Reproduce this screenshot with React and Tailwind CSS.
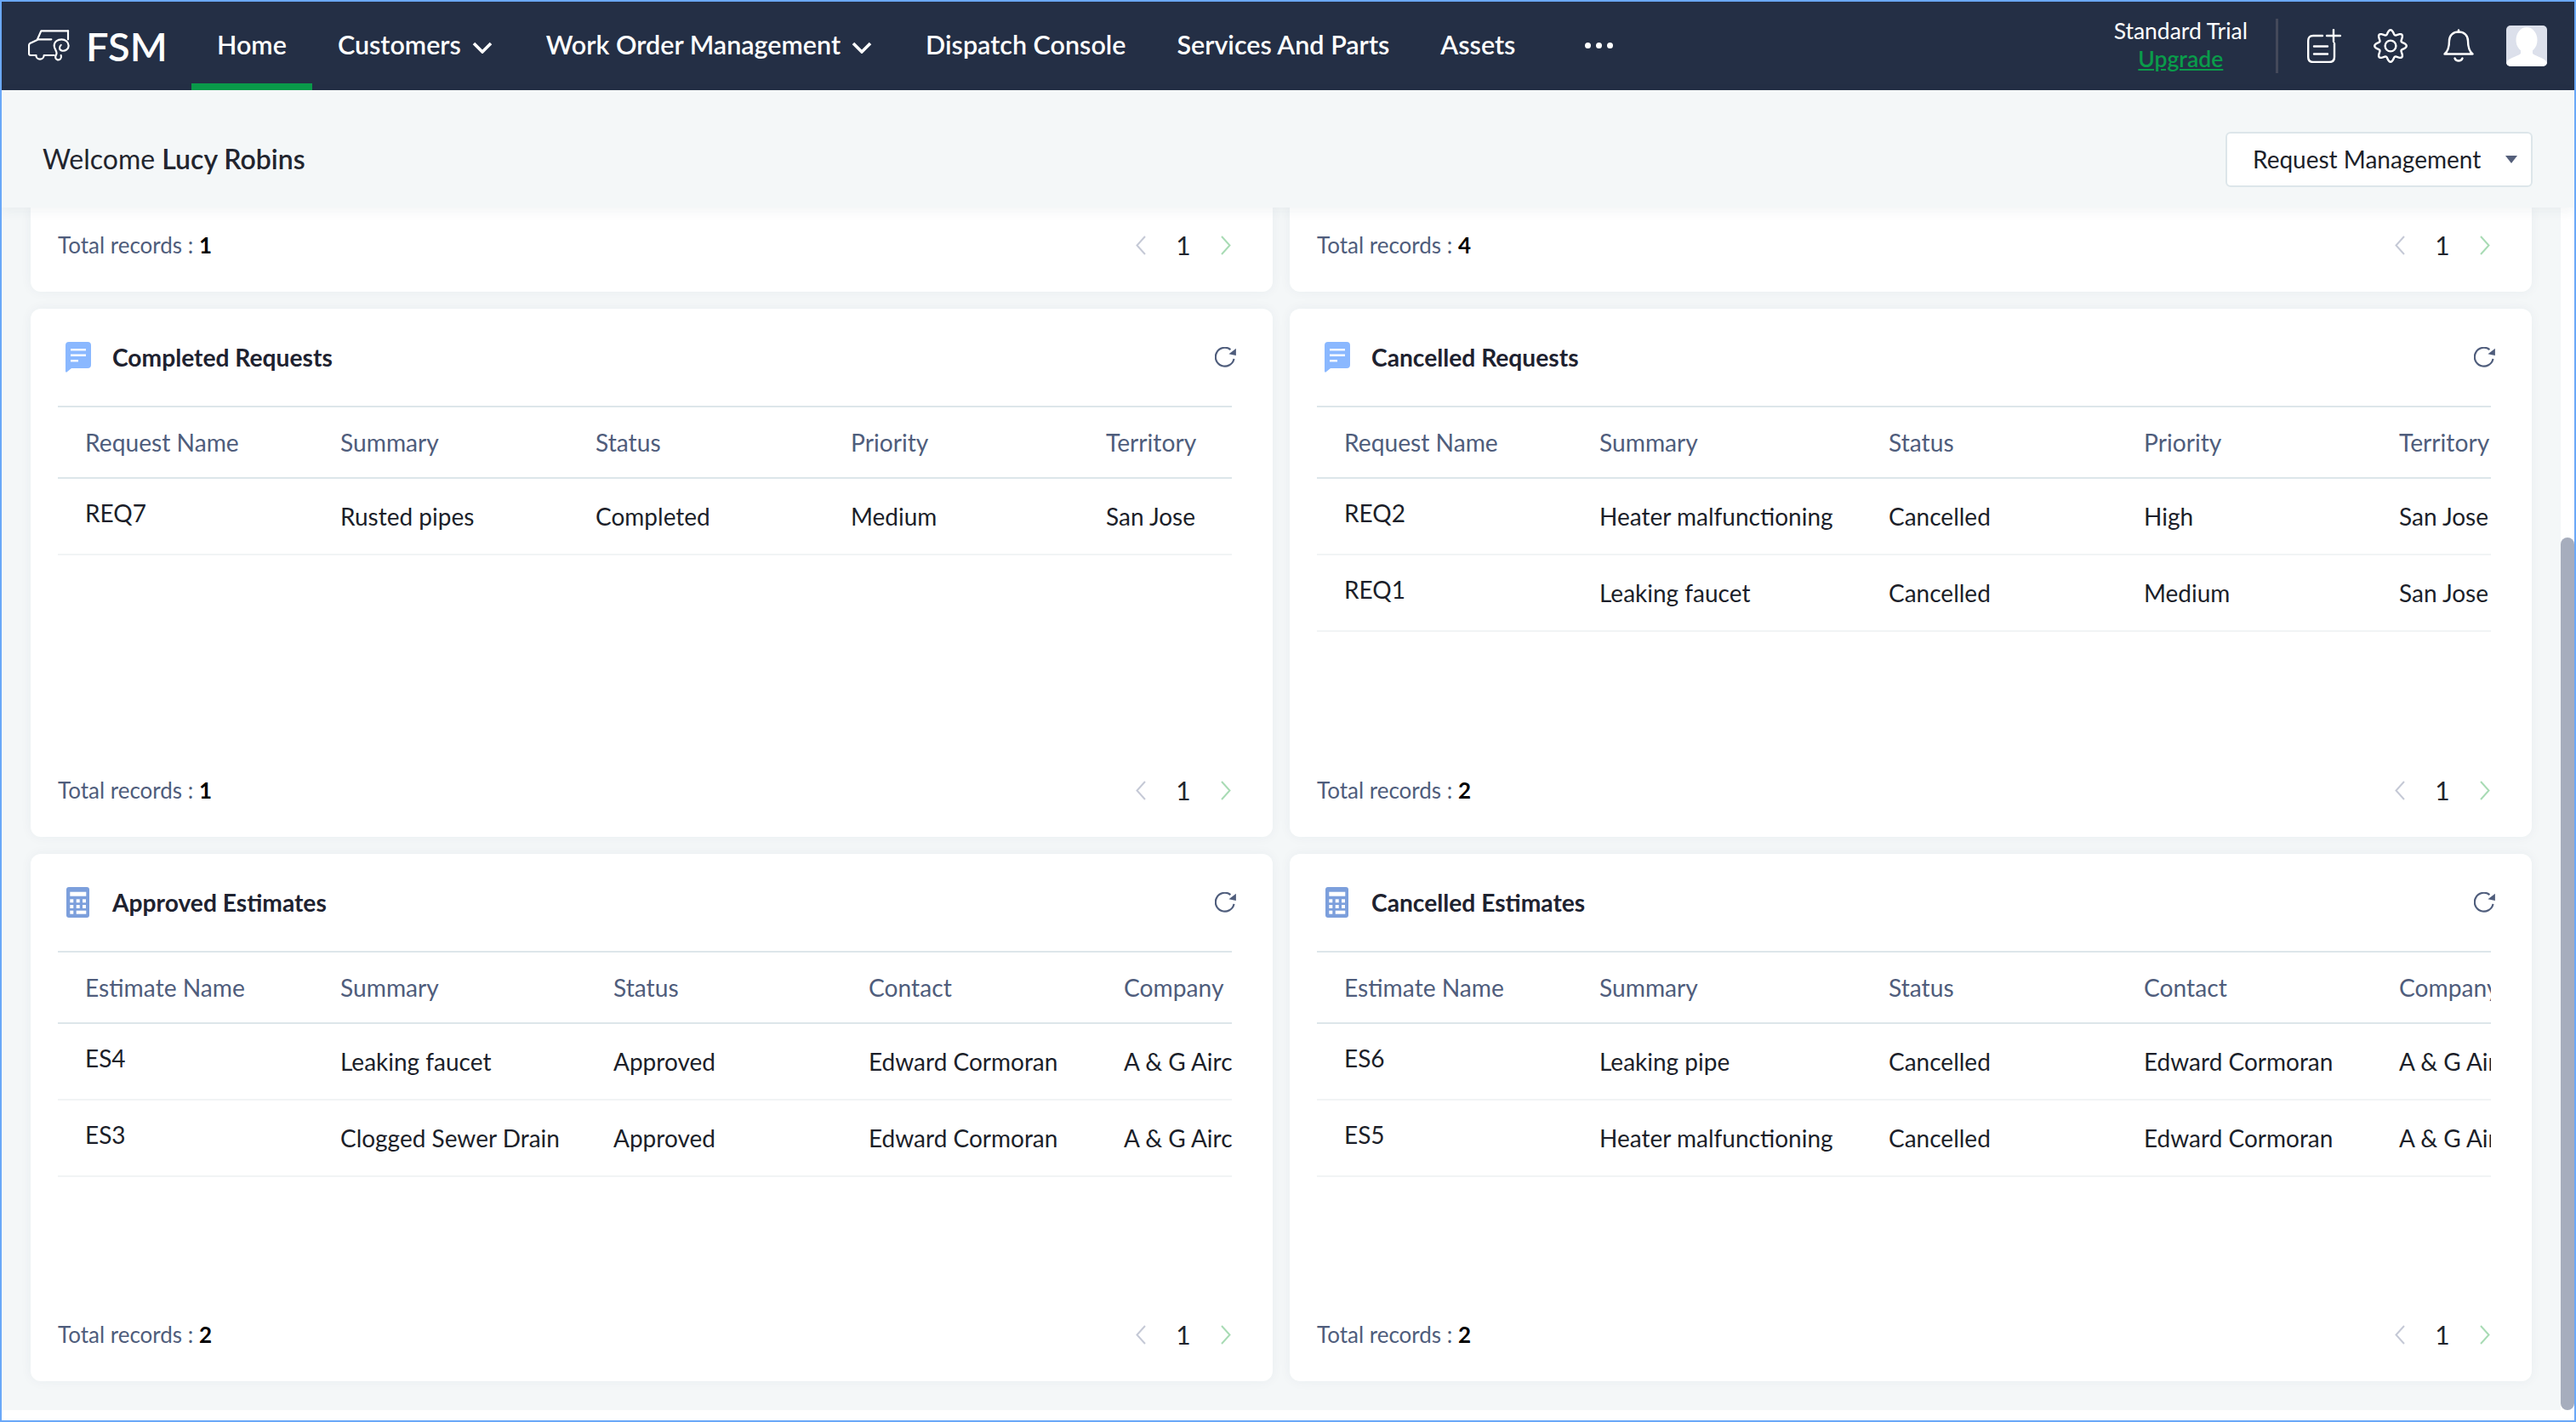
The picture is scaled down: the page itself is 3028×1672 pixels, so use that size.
import React from "react";

const requestCols = "grid-cols-[300px_300px_300px_300px_300px]";
const wideCols = "grid-cols-[300px_340px_300px_300px_300px]";
const estimateCols = "grid-cols-[300px_321px_300px_300px_300px]";

const cards = [
  {
    title: "Completed Requests",
    icon: "chat",
    cols: requestCols,
    total: 1,
    head: ["Request Name", "Summary", "Status", "Priority", "Territory"],
    rows: [["REQ7", "Rusted pipes", "Completed", "Medium", "San Jose"]],
  },
  {
    title: "Cancelled Requests",
    icon: "chat",
    cols: wideCols,
    total: 2,
    head: ["Request Name", "Summary", "Status", "Priority", "Territory"],
    rows: [
      ["REQ2", "Heater malfunctioning", "Cancelled", "High", "San Jose"],
      ["REQ1", "Leaking faucet", "Cancelled", "Medium", "San Jose"],
    ],
  },
  {
    title: "Approved Estimates",
    icon: "calc",
    cols: estimateCols,
    total: 2,
    head: ["Estimate Name", "Summary", "Status", "Contact", "Company"],
    rows: [
      ["ES4", "Leaking faucet", "Approved", "Edward Cormoran", "A & G Aircon"],
      ["ES3", "Clogged Sewer Drain", "Approved", "Edward Cormoran", "A & G Aircon"],
    ],
  },
  {
    title: "Cancelled Estimates",
    icon: "calc",
    cols: wideCols,
    total: 2,
    head: ["Estimate Name", "Summary", "Status", "Contact", "Company"],
    rows: [
      ["ES6", "Leaking pipe", "Cancelled", "Edward Cormoran", "A & G Aircon"],
      ["ES5", "Heater malfunctioning", "Cancelled", "Edward Cormoran", "A & G Aircon"],
    ],
  },
];

const ChevronDown = () => (
  <svg width="24" height="14" viewBox="0 0 24 14" fill="none" stroke="#fff" strokeWidth="3.6" className="ml-[13px] mr-[3px] mt-[6px]">
    <path d="M2 2 L12 12 L22 2" />
  </svg>
);

const LogoIcon = () => (
  <svg width="50" height="38" viewBox="0 0 150 114" fill="none" stroke="#fff" strokeWidth="6.5" strokeLinejoin="round" strokeLinecap="round">
    <path d="M141 4 H46 L32 36 L8 47 Q3 50 3 56 V84 Q3 90 9 90 H28" />
    <path d="M28 90 a14 14 0 0 0 28 0 H92" />
    <path d="M34 34 H82" />
    <path d="M141 4 V34" />
    <path d="M116 90 C120 100 112 108 104 106 C96 104 94 96 100 86 C104 78 92 68 92 56 C92 42 104 34 118 34 C132 34 143 44 143 56 C143 68 132 76 120 74 C110 72 108 60 116 54" />
  </svg>
);

const AddIcon = () => (
  <svg width="40" height="40" viewBox="0 0 40 40" fill="none" stroke="#fff" strokeWidth="2.4" strokeLinecap="round">
    <path d="M18 8 H7 Q1.2 8 1.2 14 V33 Q1.2 39 7 39 H26 Q32 39 32 33 V17" />
    <path d="M8 20.5 H24 M8 29.5 H24" />
    <path d="M31 1 V15 M23 8 H39" />
  </svg>
);

const gearPath = () => {
  const pts = [];
  for (let i = 0; i < 96; i++) {
    const a = (i / 96) * Math.PI * 2;
    const r = 16.2 + 2.6 * Math.cos(8 * a);
    pts.push(`${(20 + r * Math.cos(a)).toFixed(2)} ${(20 + r * Math.sin(a)).toFixed(2)}`);
  }
  return "M" + pts.join(" L") + " Z";
};

const GearIcon = () => (
  <svg width="40" height="40" viewBox="0 0 40 40" fill="none" stroke="#fff" strokeWidth="2.4">
    <path d={gearPath()} />
    <circle cx="20" cy="20" r="6.4" />
  </svg>
);

const BellIcon = () => (
  <svg width="36" height="40" viewBox="0 0 36 40" fill="none" stroke="#fff" strokeWidth="2.4" strokeLinejoin="round" strokeLinecap="round">
    <path d="M1.5 29.5 C6 26 7 20 7 14 C7 7.5 11.5 3.5 18 3.5 C24.5 3.5 29 7.5 29 14 C29 20 30 26 34.5 29.5 Z" />
    <path d="M18 1.5 V3.5" />
    <path d="M13.5 34.5 C15 38.5 21 38.5 22.5 34.5" />
  </svg>
);

const Avatar = () => (
  <div className="w-12 h-12 rounded-[5px] overflow-hidden bg-[#dce0eb]">
    <svg width="48" height="48" viewBox="0 0 48 48">
      <ellipse cx="24" cy="17" rx="12.5" ry="15" fill="#fff" />
      <path d="M0 44 C2 38 12 37 17 33 L17 26 L31 26 L31 33 C36 37 46 38 48 44 V48 H0 Z" fill="#fff" />
    </svg>
  </div>
);

const ChatIcon = () => (
  <svg width="30" height="36" viewBox="0 0 30 36" className="ml-[9px]">
    <path d="M4 0 H26 Q30 0 30 4 V27 Q30 31 26 31 H7 L1.5 35.5 Q0 36 0 34.5 V4 Q0 0 4 0 Z" fill="#8ab8ff" />
    <rect x="6" y="8" width="18" height="2.4" fill="#fff" />
    <rect x="6" y="14.5" width="18" height="2.4" fill="#fff" />
    <rect x="6" y="21" width="9" height="2.4" fill="#fff" />
  </svg>
);

const CalcIcon = () => (
  <svg width="27" height="36" viewBox="0 0 27 36" className="ml-[10px]">
    <rect width="27" height="36" rx="3" fill="#7c9fdc" />
    <rect x="4.3" y="5.7" width="19" height="5" fill="#fff" />
    {[14.3, 21].map((y) =>
      [4.3, 11.7, 19].map((x) => <rect key={`${x}-${y}`} x={x} y={y} width="4" height="4" fill="#fff" />)
    )}
    <rect x="4.3" y="27.7" width="4" height="4" fill="#fff" />
    <rect x="11.7" y="27.7" width="11.6" height="4" fill="#fff" />
  </svg>
);

const RefreshIcon = () => (
  <svg width="25" height="25" viewBox="0 0 24 24" fill="none">
    <path d="M21.6 13.3 A10.5 10.5 0 1 1 17.7 2.9" stroke="#4f5d7c" strokeWidth="2.1" />
    <path d="M23.9 1.6 V9.5 L15.8 7.8 Z" fill="#4f5d7c" />
  </svg>
);

const Pager = () => (
  <div className="flex items-center">
    <svg width="12" height="23" viewBox="0 0 12 23" fill="none" stroke="#c5c9d6" strokeWidth="2">
      <path d="M11 1 L1.5 11.5 L11 22" />
    </svg>
    <span className="w-[88px] text-center text-[30px] text-[#22252e]">1</span>
    <svg width="12" height="23" viewBox="0 0 12 23" fill="none" stroke="#a8dbb4" strokeWidth="2">
      <path d="M1 1 L10.5 11.5 L1 22" />
    </svg>
  </div>
);

const Footer = ({ total }) => (
  <div className="mt-auto h-[110px] shrink-0 flex items-center justify-between pl-8 pr-[49px] text-[26px]">
    <span className="text-[#4f5d7c]">
      Total records : <span className="font-bold text-black">{total}</span>
    </span>
    <Pager />
  </div>
);

const Card = ({ card }) => (
  <div className="flex flex-col bg-white rounded-xl shadow-[0_0_14px_rgba(40,60,90,0.05)]">
    <div className="h-[114px] shrink-0 flex items-center pl-8 pr-[43px]">
      {card.icon === "chat" ? <ChatIcon /> : <CalcIcon />}
      <span className={`font-bold text-[28.2px] text-[#1e2230] ${card.icon === "chat" ? "ml-[25px]" : "ml-[27px]"}`}>{card.title}</span>
      <span className="ml-auto">
        <RefreshIcon />
      </span>
    </div>
    <div className="ml-8 mr-[48px] overflow-hidden border-t-2 border-[#dde6ea] text-[28px] whitespace-nowrap">
      <div className={`grid ${card.cols} h-[82px] items-center pl-8 border-b-2 border-[#dde6ea] text-[#4f5d7c] text-[28.2px] box-content`}>
        {card.head.map((h) => (
          <div key={h}>{h}</div>
        ))}
      </div>
      {card.rows.map((row) => (
        <div key={row[0]} className={`grid ${card.cols} h-[88px] items-center pl-8 border-b-2 border-[#f1f4f5] text-[#1c1f2a] box-content`}>
          {row.map((c, i) => (
            <div key={i} className={i === 0 ? "pb-[8px]" : ""}>
              {c}
            </div>
          ))}
        </div>
      ))}
    </div>
    <Footer total={card.total} />
  </div>
);

const navItems = [
  { label: "Customers", arrow: true },
  { label: "Work Order Management", arrow: true },
  { label: "Dispatch Console" },
  { label: "Services And Parts" },
  { label: "Assets" },
];

export default function App() {
  return (
    <div className="h-screen flex flex-col overflow-hidden border-2 border-[#6aa8f8] bg-white font-[Lato,sans-serif]">
      <header className="h-[104px] shrink-0 flex items-stretch bg-[#242f45] text-white">
        <div className="w-[223px] flex items-center pl-[31px]">
          <LogoIcon />
          <span className="ml-[18px] text-[47px] font-semibold leading-none">FSM</span>
        </div>
        <nav className="flex items-stretch text-[30.5px] font-semibold">
          <div className="flex items-center px-[30px] border-b-8 border-[#0a9b4a] pt-[6px]">Home</div>
          {navItems.map((item) => (
            <div key={item.label} className="flex items-center px-[30px] pb-[2px]">
              {item.label}
              {item.arrow && <ChevronDown />}
            </div>
          ))}
          <div className="flex items-center gap-[6px] ml-[52px] pb-[2px]">
            <span className="w-[7px] h-[7px] rounded-full bg-white" />
            <span className="w-[7px] h-[7px] rounded-full bg-white" />
            <span className="w-[7px] h-[7px] rounded-full bg-white" />
          </div>
        </nav>
        <div className="ml-auto flex items-center pr-[32px]">
          <div className="flex flex-col items-center text-[26.5px] leading-[33px] pb-[2px]">
            <span>Standard Trial</span>
            <span className="text-[#0a9b4a] font-semibold underline">Upgrade</span>
          </div>
          <div className="w-[3px] h-16 bg-[#44495a] ml-[33px] mr-[34px]" />
          <AddIcon />
          <span className="ml-[38px]">
            <GearIcon />
          </span>
          <span className="ml-[42px]">
            <BellIcon />
          </span>
          <span className="ml-[38px]">
            <Avatar />
          </span>
        </div>
      </header>

      <div className="relative z-10 h-[138px] shrink-0 flex items-center justify-between pt-6 pl-[48px] pr-[49px] bg-[#f4f7f8] shadow-[0_4px_14px_rgba(40,60,90,0.06)]">
        <div className="text-[32px] text-[#22252e]">
          Welcome <span className="font-semibold">Lucy Robins</span>
        </div>
        <div className="w-[361px] h-[65px] flex items-center justify-between pl-[30px] pr-[16px] bg-white border-2 border-[#dde6ea] rounded-md text-[28px] text-[#1c1f2a]">
          Request Management
          <span className="w-0 h-0 border-x-[7px] border-x-transparent border-t-[9px] border-t-[#545f7a]" />
        </div>
      </div>

      <div className="flex-1 flex min-h-0">
        <main className="flex-1 grid grid-cols-2 grid-rows-[99px_621px_620px] gap-x-5 gap-y-5 px-[34px] bg-[#f4f7f8]">
          <div className="bg-white rounded-b-xl shadow-[0_0_14px_rgba(40,60,90,0.05)] flex flex-col justify-end">
            <Footer total={1} />
          </div>
          <div className="bg-white rounded-b-xl shadow-[0_0_14px_rgba(40,60,90,0.05)] flex flex-col justify-end">
            <Footer total={4} />
          </div>
          {cards.map((card) => (
            <Card key={card.title} card={card} />
          ))}
        </main>
        <div className="w-4 shrink-0 flex flex-col bg-white pt-[388px]">
          <div className="flex-1 bg-[#a6adbd] rounded-full" />
        </div>
      </div>
      <div className="h-3 shrink-0 bg-white" />
    </div>
  );
}
